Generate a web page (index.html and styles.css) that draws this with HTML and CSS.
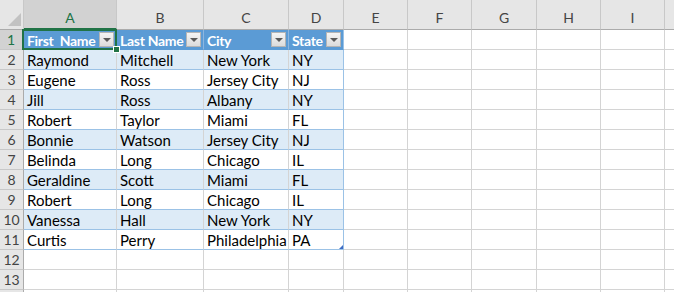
FILE: index.html
```html
<!DOCTYPE html>
<html>
<head>
<meta charset="utf-8">
<link rel="stylesheet" href="styles.css">
</head>
<body>
<div class="sheet">
  <div class="corner"><span class="corner-tri"></span></div>
  <div class="colhead sel">A</div>
  <div class="colhead">B</div>
  <div class="colhead">C</div>
  <div class="colhead">D</div>
  <div class="colhead">E</div>
  <div class="colhead">F</div>
  <div class="colhead">G</div>
  <div class="colhead">H</div>
  <div class="colhead">I</div>
  <div class="colhead last"></div>

  <div class="rowhead sel">1</div>
  <div class="cell th active"><span class="th-text">First&nbsp; Name</span><span class="dd"></span><span class="selbox"></span><span class="handle"></span></div>
  <div class="cell th"><span class="th-text">Last Name</span><span class="dd"></span></div>
  <div class="cell th"><span class="th-text">City</span><span class="dd"></span></div>
  <div class="cell th tend"><span class="th-text">State</span><span class="dd"></span></div>
  <div class="cell"></div><div class="cell"></div><div class="cell"></div><div class="cell"></div><div class="cell"></div><div class="cell last"></div>

  <div class="rowhead">2</div>
  <div class="cell tb band">Raymond</div><div class="cell tb band">Mitchell</div><div class="cell tb band">New York</div><div class="cell tb band tend">NY</div>
  <div class="cell"></div><div class="cell"></div><div class="cell"></div><div class="cell"></div><div class="cell"></div><div class="cell last"></div>

  <div class="rowhead">3</div>
  <div class="cell tb">Eugene</div><div class="cell tb">Ross</div><div class="cell tb">Jersey City</div><div class="cell tb tend">NJ</div>
  <div class="cell"></div><div class="cell"></div><div class="cell"></div><div class="cell"></div><div class="cell"></div><div class="cell last"></div>

  <div class="rowhead">4</div>
  <div class="cell tb band">Jill</div><div class="cell tb band">Ross</div><div class="cell tb band">Albany</div><div class="cell tb band tend">NY</div>
  <div class="cell"></div><div class="cell"></div><div class="cell"></div><div class="cell"></div><div class="cell"></div><div class="cell last"></div>

  <div class="rowhead">5</div>
  <div class="cell tb">Robert</div><div class="cell tb">Taylor</div><div class="cell tb">Miami</div><div class="cell tb tend">FL</div>
  <div class="cell"></div><div class="cell"></div><div class="cell"></div><div class="cell"></div><div class="cell"></div><div class="cell last"></div>

  <div class="rowhead">6</div>
  <div class="cell tb band">Bonnie</div><div class="cell tb band">Watson</div><div class="cell tb band">Jersey City</div><div class="cell tb band tend">NJ</div>
  <div class="cell"></div><div class="cell"></div><div class="cell"></div><div class="cell"></div><div class="cell"></div><div class="cell last"></div>

  <div class="rowhead">7</div>
  <div class="cell tb">Belinda</div><div class="cell tb">Long</div><div class="cell tb">Chicago</div><div class="cell tb tend">IL</div>
  <div class="cell"></div><div class="cell"></div><div class="cell"></div><div class="cell"></div><div class="cell"></div><div class="cell last"></div>

  <div class="rowhead">8</div>
  <div class="cell tb band">Geraldine</div><div class="cell tb band">Scott</div><div class="cell tb band">Miami</div><div class="cell tb band tend">FL</div>
  <div class="cell"></div><div class="cell"></div><div class="cell"></div><div class="cell"></div><div class="cell"></div><div class="cell last"></div>

  <div class="rowhead">9</div>
  <div class="cell tb">Robert</div><div class="cell tb">Long</div><div class="cell tb">Chicago</div><div class="cell tb tend">IL</div>
  <div class="cell"></div><div class="cell"></div><div class="cell"></div><div class="cell"></div><div class="cell"></div><div class="cell last"></div>

  <div class="rowhead">10</div>
  <div class="cell tb band">Vanessa</div><div class="cell tb band">Hall</div><div class="cell tb band">New York</div><div class="cell tb band tend">NY</div>
  <div class="cell"></div><div class="cell"></div><div class="cell"></div><div class="cell"></div><div class="cell"></div><div class="cell last"></div>

  <div class="rowhead">11</div>
  <div class="cell tb">Curtis</div><div class="cell tb">Perry</div><div class="cell tb">Philadelphia</div><div class="cell tb tend">PA<span class="resize"></span></div>
  <div class="cell"></div><div class="cell"></div><div class="cell"></div><div class="cell"></div><div class="cell"></div><div class="cell last"></div>

  <div class="rowhead">12</div>
  <div class="cell"></div><div class="cell"></div><div class="cell"></div><div class="cell"></div>
  <div class="cell"></div><div class="cell"></div><div class="cell"></div><div class="cell"></div><div class="cell"></div><div class="cell last"></div>

  <div class="rowhead">13</div>
  <div class="cell"></div><div class="cell"></div><div class="cell"></div><div class="cell"></div>
  <div class="cell"></div><div class="cell"></div><div class="cell"></div><div class="cell"></div><div class="cell"></div><div class="cell last"></div>

  <div class="rowhead stub"></div>
  <div class="cell stub"></div><div class="cell stub"></div><div class="cell stub"></div><div class="cell stub"></div>
  <div class="cell stub"></div><div class="cell stub"></div><div class="cell stub"></div><div class="cell stub"></div><div class="cell stub"></div><div class="cell stub last"></div>
</div>
</body>
</html>
```

FILE: styles.css
```css
html, body {
  margin: 0;
  padding: 0;
  background: #ffffff;
  overflow: hidden;
}

.sheet {
  display: grid;
  grid-template-columns: 24px 93px 87px 85px 55px 64px 64px 65px 64px 64px 1fr;
  grid-template-rows: 30px repeat(13, 20px) 2px;
  width: 674px;
  font-family: Lato, "Liberation Sans", sans-serif;
  font-size: 15px;
  color: #000;
}

.sheet > div {
  box-sizing: border-box;
  position: relative;
  white-space: nowrap;
  overflow: visible;
}

.corner {
  background: #e6e6e6;
  border-right: 1px solid #c8c8c8;
  border-bottom: 1px solid #ababab;
}

.corner-tri {
  position: absolute;
  right: 2px;
  bottom: 3px;
  width: 0;
  height: 0;
  border-left: 13px solid transparent;
  border-bottom: 13px solid #c2c2c2;
}

.colhead {
  background: #e6e6e6;
  border-right: 1px solid #c8c8c8;
  border-bottom: 1px solid #ababab;
  color: #444;
  font-size: 14px;
  text-align: center;
  padding-top: 10px;
  line-height: 16px;
}

.colhead.sel {
  background: #d2d2d2;
  color: #217346;
  border-bottom: 2px solid #217346;
}

.colhead.last {
  border-right: none;
}

.rowhead {
  background: #e6e6e6;
  border-right: 1px solid #ababab;
  border-bottom: 1px solid #c8c8c8;
  color: #444;
  font-size: 14px;
  text-align: center;
  line-height: 20px;
}

.rowhead.sel {
  background: #d2d2d2;
  color: #217346;
  border-right: 2px solid #217346;
}

.rowhead.stub {
  border-bottom: none;
}

.cell {
  border-right: 1px solid #d4d4d4;
  border-bottom: 1px solid #d4d4d4;
  padding-left: 3px;
  line-height: 21px;
}

.cell.stub {
  border-bottom: none;
}

.cell.last {
  border-right: none;
}

.cell.th {
  background: #5b9bd5;
  color: #fff;
  font-weight: bold;
  font-size: 14px;
  letter-spacing: -0.3px;
  border-right: 1px solid #8cb6e0;
  border-bottom: 1px solid #5b9bd5;
}

.cell.tb {
  border-bottom: 1px solid #9bc2e6;
}

.cell.band {
  background: #ddebf7;
}

.cell.tend {
  border-right: 1px solid #9bc2e6;
}

.dd {
  position: absolute;
  z-index: 2;
  right: 2px;
  top: 2px;
  width: 15px;
  height: 15px;
  box-sizing: border-box;
  border: 1px solid #b5b5b5;
  background: linear-gradient(#f4f4f4, #dcdcdc);
}

.dd::after {
  content: "";
  position: absolute;
  left: 3px;
  top: 5px;
  width: 0;
  height: 0;
  border-left: 4px solid transparent;
  border-right: 4px solid transparent;
  border-top: 4px solid #5a5a5a;
}

.selbox {
  position: absolute;
  z-index: 3;
  left: -2px;
  top: -1px;
  right: -1px;
  bottom: -1px;
  border: 2px solid #217346;
  pointer-events: none;
}

.handle {
  position: absolute;
  z-index: 4;
  right: -4px;
  bottom: -4px;
  width: 5px;
  height: 5px;
  background: #217346;
  border: 1px solid #fff;
}

.resize {
  position: absolute;
  right: 0;
  bottom: 0;
  width: 4px;
  height: 4px;
  background: #3f6cc4;
  clip-path: polygon(100% 0, 100% 100%, 0 100%);
}
```
